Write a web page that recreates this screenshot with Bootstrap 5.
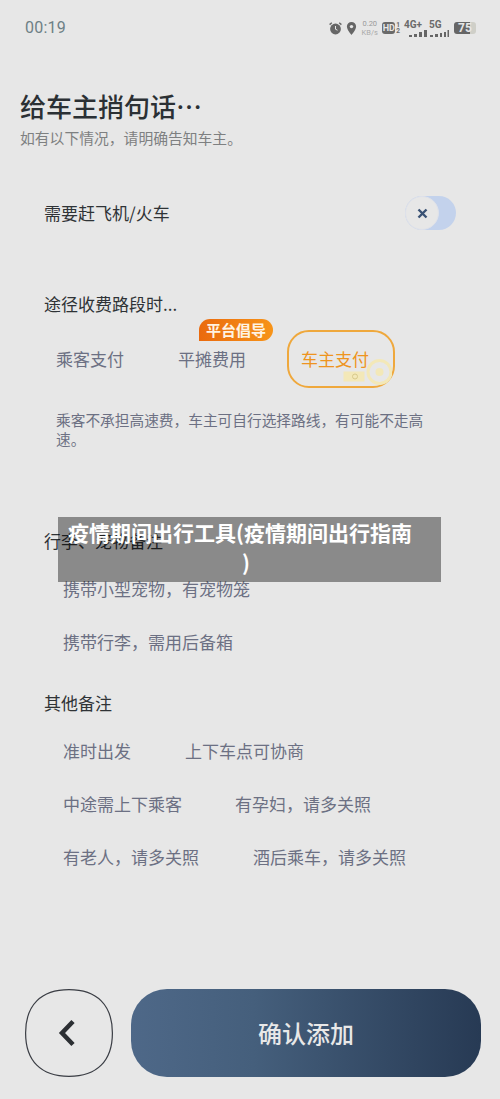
<!DOCTYPE html>
<html lang="zh-CN">
<head>
<meta charset="utf-8">
<title>给车主捎句话</title>
<link rel="stylesheet" href="https://cdn.jsdelivr.net/npm/bootstrap@5.3.0/dist/css/bootstrap.min.css">
<style>
html,body{background:#e7e7e7}
body{font-family:"Noto Sans CJK SC","Noto Sans",sans-serif;width:500px;height:1099px;overflow:hidden;position:relative;color:#2b3034}
.sbar{height:54px;padding:2px 24px 0 25px;color:#6a6a6a}
.clock{font:400 16px/20px Roboto,sans-serif;color:#6d7f85;letter-spacing:.2px}
.sicons{gap:4px}
.speed{font:400 7.5px/7px Roboto,sans-serif;color:#9a9a9a;text-align:center;width:17px}
.kbs{color:#aaa;margin-top:2px}
.net{font:700 10px/10px Roboto,sans-serif;color:#6a6a6a}
.hd{font:700 9px/12px Roboto,sans-serif;background:#6a6a6a;color:#e7e7e7;border-radius:3px;width:13px;text-align:center}
.sim{font:700 6.500px/6.500px Roboto,sans-serif;color:#6a6a6a}
.batt{width:22px;height:12px;border-radius:3px;background:linear-gradient(90deg,#666 75%,#cfcfc8 75%);color:#e7e7e7;font:700 12px/12px Roboto,sans-serif;padding-left:4px}
.ttl{font-size:26px;line-height:36px;margin:34px 0 0 20px;font-weight:500;color:#2b3034}
.sub{font-size:14.800px;line-height:22px;margin:3px 0 0 20px;color:#7e8081}
.sec{font-size:17px;line-height:24px;margin-left:44px;color:#2f3336}
.tgl{width:51px;height:34px;border-radius:17px;background:#c3d2ec;margin-right:44px}
.knob{width:34px;height:34px;border:1px solid #dfe2ea;background:#e7e7e7}
.opts{margin:14px 0 0 56px;height:58px}
.opt{font-size:17px;line-height:24px;color:#6c7083}
.o1{width:122px}
.o2{width:109px}
.o3{width:108px;height:58px;border:2px solid #efa83c;border-radius:22px;padding-left:12px;color:#ee9420}
.tagp{left:199px;top:319px;width:74px;height:22px;background:linear-gradient(90deg,#ea6a0e,#f79419);border-radius:11px 11px 11px 0;color:#fff3e2;font-size:15px;line-height:21px;font-weight:700;text-align:center}
.deco{right:1px;bottom:1px}
.desc{font-size:14.700px;line-height:19px;margin:22px 70px 0 56px;color:#6c7083}
.rowi{margin-left:63px;font-size:17px;line-height:24px;color:#6c7083}
.banner{left:58px;top:517px;width:383px;height:65px;background:rgba(0,0,0,.4);color:#fff;font-size:21px;line-height:30px;font-weight:700;padding:0 0 0 10px;white-space:nowrap}
.paren{padding-right:17px;text-align:center}
.foot{left:25px;right:19px;top:989px}
.cta{width:350px;height:88px;border-radius:36px;background:linear-gradient(90deg,#4e6888,#455f7c 35%,#273a54);color:#e8e8e8;font-size:24px;font-weight:500;border:0;padding:0}
.cta:hover,.cta:active{background:linear-gradient(90deg,#4e6888,#455f7c 35%,#273a54)!important;color:#e8e8e8!important}
.backb{width:88px;height:88px;background:none;border:0;padding:0}
</style>
</head>
<body>
<div class="sbar d-flex align-items-center justify-content-between">
  <span class="clock">00:19</span>
  <div class="sicons d-flex align-items-center">
    <svg width="13" height="13" viewBox="0 0 13 13"><circle cx="6.500" cy="7" r="5.400" fill="#666"/><path d="M6.500 4v3.200l2 1" stroke="#e7e7e7" fill="none"/><path d="M.6 2.600 2.800.8M12.400 2.600 10.200.8" stroke="#666" stroke-width="1.400"/></svg>
    <svg width="11" height="13" viewBox="0 0 11 13"><path d="M5.500 0a4.600 4.600 0 0 0-4.600 4.600C.9 8 5.500 13 5.500 13s4.600-5 4.600-8.400A4.600 4.600 0 0 0 5.500 0Z" fill="#666"/><circle cx="5.500" cy="4.600" r="1.700" fill="#e7e7e7"/></svg>
    <div class="speed"><div>0.20</div><div class="kbs">KB/s</div></div>
    <div class="d-flex align-items-center" style="gap:1px"><span class="hd">HD</span><span class="sim"><div>1</div><div>2</div></span></div>
    <div style="width:21px"><div class="net">4G+</div><svg width="20" height="7" class="d-block ms-1"><path d="M1 5h3v2H1zM6 4h3v3H6zM11 2h3v5h-3zM16 0h3v7h-3z" fill="#666"/></svg></div>
    <div style="width:21px"><div class="net">5G</div><svg width="20" height="7" class="d-block"><path d="M1 5h3v2H1zM6 4h3v3H6zM11 3h2v4h-2zM15 2h2v5h-2zM18.500 0h1.500v7h-1.500z" fill="#666"/></svg></div>
    <div class="batt">75</div>
  </div>
</div>

<h1 class="ttl">给车主捎句话…</h1>
<p class="sub mb-0">如有以下情况，请明确告知车主。</p>

<div class="d-flex align-items-center justify-content-between" style="margin-top:47px">
  <div class="sec">需要赶飞机/火车</div>
  <div class="tgl"><div class="knob rounded-circle d-flex align-items-center justify-content-center"><svg width="11" height="11" viewBox="0 0 11 11"><path d="M1.500 1.500l8 8M9.500 1.500l-8 8" stroke="#3a5274" stroke-width="2.400"/></svg></div></div>
</div>

<div class="sec" style="margin-top:62px">途径收费路段时...</div>
<div class="opts d-flex align-items-center">
  <div class="opt o1">乘客支付</div>
  <div class="opt o2">平摊费用</div>
  <div class="opt o3 d-flex align-items-center position-relative">车主支付
    <svg class="deco position-absolute" width="50" height="32" viewBox="0 0 50 32"><circle cx="37.500" cy="19" r="11.500" fill="none" stroke="#f3e8b8" stroke-width="3"/><circle cx="37.500" cy="19" r="4" fill="#f3e8b8"/><rect x="1.500" y="18.500" width="21" height="10" fill="#f3e8b8"/><circle cx="13" cy="23.500" r="2.500" fill="none" stroke="#d8c98a"/></svg>
  </div>
</div>
<div class="tagp position-absolute">平台倡导</div>
<p class="desc mb-0">乘客不承担高速费，车主可自行选择路线，有可能不走高速。</p>

<div class="sec" style="margin-top:81px">行李、宠物备注</div>
<div class="rowi" style="margin-top:24px">携带小型宠物，有宠物笼</div>
<div class="rowi" style="margin-top:29px">携带行李，需用后备箱</div>

<div class="sec" style="margin-top:37px">其他备注</div>
<div class="rowi d-flex" style="margin-top:24px;gap:54px"><span>准时出发</span><span>上下车点可协商</span></div>
<div class="rowi d-flex" style="margin-top:29px;gap:53px"><span>中途需上下乘客</span><span>有孕妇，请多关照</span></div>
<div class="rowi d-flex" style="margin-top:29px;gap:54px"><span>有老人，请多关照</span><span>酒后乘车，请多关照</span></div>

<div class="banner position-absolute">疫情期间出行工具(疫情期间出行指南<div class="paren">)</div></div>

<div class="foot position-absolute d-flex justify-content-between">
  <button class="backb btn" aria-label="返回"><svg width="88" height="88" viewBox="0 0 88 88"><path d="M44 .6C72 .6 87.400 16 87.400 44S72 87.400 44 87.400.6 72 .6 44 16 .6 44 .6Z" fill="none" stroke="#3a3d44" stroke-width="1.200"/><path d="M48 32.500 37 44l11 11.500" fill="none" stroke="#2c2f33" stroke-width="4.500"/></svg></button>
  <button class="cta btn">确认添加</button>
</div>
<script src="https://cdn.jsdelivr.net/npm/bootstrap@5.3.0/dist/js/bootstrap.bundle.min.js"></script>
</body>
</html>
